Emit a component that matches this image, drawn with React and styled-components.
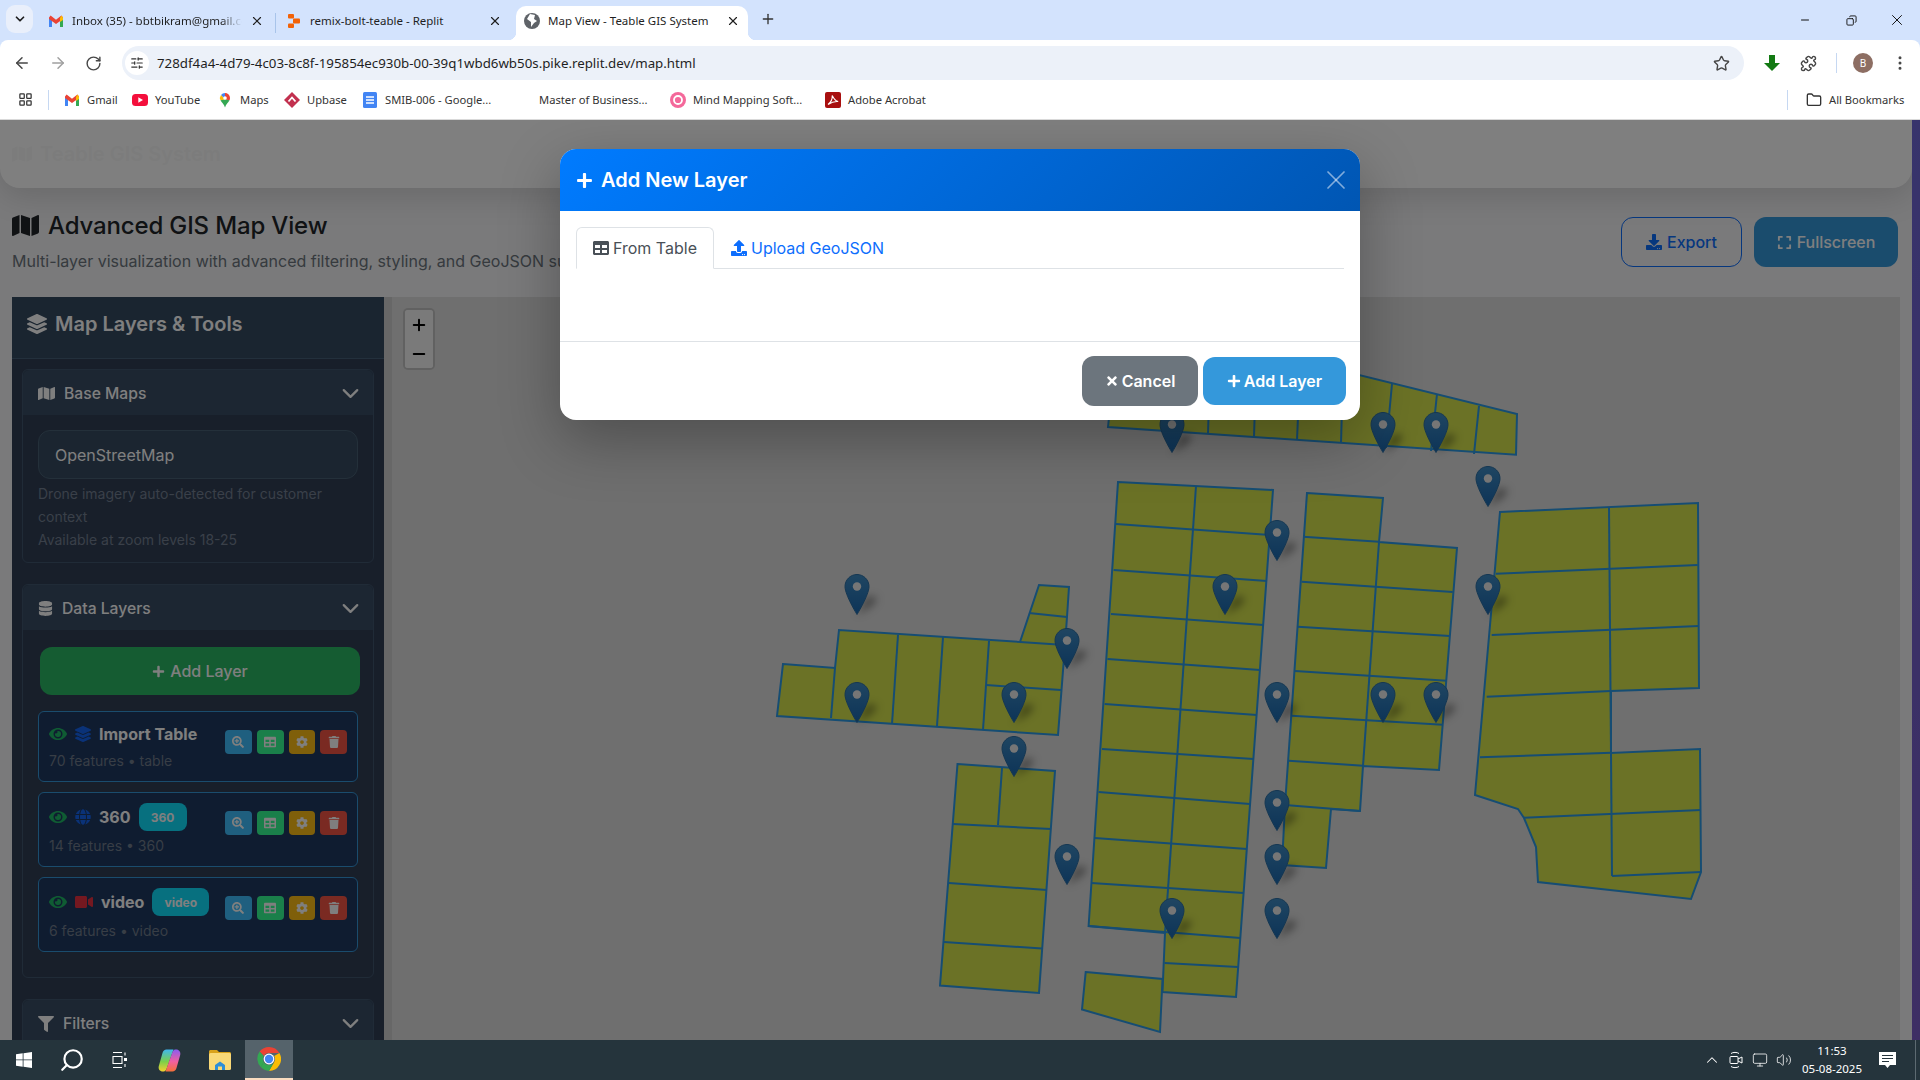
import styled, { createGlobalStyle } from "styled-components";
import {
  ArrowLeft,
  ArrowRight,
  ChevronDown,
  ChevronUp,
  Copy,
  EllipsisVertical,
  Folder,
  LayoutGrid,
  Minus,
  Monitor,
  Plus,
  Puzzle,
  RotateCw,
  Search,
  SlidersHorizontal,
  Star,
  Volume2,
  X,
} from "lucide-react";
import {
  FaCog,
  FaDatabase,
  FaDownload,
  FaExpand,
  FaEye,
  FaFilter,
  FaGlobe,
  FaLayerGroup,
  FaMap,
  FaPlus,
  FaSearchPlus,
  FaTable,
  FaTimes,
  FaTrash,
  FaUpload,
  FaVideo,
} from "react-icons/fa";

const GlobalStyle = createGlobalStyle`
  html, body {
    margin: 0;
    padding: 0;
    overflow: hidden;
    background: #fff;
    font-family: Inter, "Liberation Sans", sans-serif;
  }
  * { box-sizing: border-box; }
`;

const Shell = styled.div`
  width: 1920px;
  height: 1080px;
  display: flex;
  flex-direction: column;
`;

/* browser chrome */
const TabStrip = styled.div`
  height: 40px;
  flex: none;
  display: flex;
  align-items: flex-end;
  padding-left: 6px;
  background: #d3e3fd;
  font-family: "Noto Sans", sans-serif;
  font-size: 11.5px;
  color: #1f1f1f;
`;

const TabMenu = styled.div`
  width: 27px;
  height: 28px;
  margin: 0 7px 7px 0;
  border-radius: 9px;
  background: #e9effb;
  display: flex;
  align-items: center;
  justify-content: center;
`;

const Tab = styled.div`
  position: relative;
  width: 232px;
  height: 34px;
  margin-right: ${(p) => (p.$divided ? 0 : 6)}px;
  padding: 0 8px 5px;
  display: flex;
  align-items: center;
  gap: 8px;
  border-radius: 10px 10px 0 0;
  background: ${(p) => (p.$active ? "#fff" : "transparent")};

  ${(p) =>
    p.$active &&
    `
    &::before, &::after {
      content: "";
      position: absolute;
      bottom: 0;
      width: 8px;
      height: 8px;
    }
    &::before {
      left: -8px;
      background: radial-gradient(circle at 0 0, transparent 8px, #fff 8.5px);
    }
    &::after {
      right: -8px;
      background: radial-gradient(circle at 100% 0, transparent 8px, #fff 8.5px);
    }
  `}
`;

const TabTitle = styled.span`
  flex: 1;
  min-width: 0;
  overflow: hidden;
  white-space: nowrap;
  line-height: 16px;
  ${(p) =>
    p.$fade &&
    `
    -webkit-mask-image: linear-gradient(90deg, #000 88%, transparent);
    mask-image: linear-gradient(90deg, #000 88%, transparent);
  `}
`;

const TabDivider = styled.div`
  width: 1px;
  height: 20px;
  margin: 0 2.5px 7px;
  background: #a8c4ea;
`;

const NewTab = styled.div`
  width: 28px;
  height: 28px;
  margin: 0 0 7px 0;
  display: flex;
  align-items: center;
  justify-content: center;
  color: #333;
`;

const WindowControls = styled.div`
  margin-left: auto;
  display: flex;
  align-self: flex-start;
  padding-top: 10px;
  color: #111;
`;

const WindowButton = styled.div`
  width: 46px;
  height: 20px;
  display: flex;
  align-items: center;
  justify-content: center;
`;

const ToolbarBack = styled.div`
  background: #d3e3fd;
  flex: none;
`;

const Toolbar = styled.div`
  height: 40px;
  padding-top: 6px;
  display: flex;
  align-items: flex-start;
  background: #fff;
  border-radius: 8px 8px 0 0;
`;

const NavIcons = styled.div`
  width: 122px;
  height: 34px;
  flex: none;
  padding-left: 13px;
  display: flex;
  align-items: center;
  gap: 18px;
  color: #474747;
`;

const Omnibox = styled.div`
  width: 1622px;
  height: 34px;
  flex: none;
  display: flex;
  align-items: center;
  padding-left: 3px;
  border-radius: 17px;
  background: #ecf1f9;
  font-family: "Noto Sans", sans-serif;
  font-size: 13.3px;
  color: #1f1f1f;
`;

const SiteBadge = styled.div`
  width: 24px;
  height: 24px;
  margin-right: 8px;
  border-radius: 50%;
  background: #fff;
  display: flex;
  align-items: center;
  justify-content: center;
`;

const OmniStar = styled.div`
  margin-left: auto;
  margin-right: 14px;
  display: flex;
  color: #474747;
`;

const ToolIcons = styled.div`
  flex: 1;
  height: 34px;
  display: flex;
  align-items: center;
  padding-left: 19px;
  color: #474747;
`;

const ToolSlot = styled.div`
  width: ${(p) => p.$w}px;
  display: flex;
  align-items: center;
`;

const ToolDivider = styled.div`
  width: 1px;
  height: 20px;
  margin-right: 16px;
  background: #c6d8f2;
`;

const Avatar = styled.div`
  width: 20px;
  height: 20px;
  border-radius: 50%;
  background: #8d6e63;
  color: #fff;
  font-size: 10px;
  font-family: "Noto Sans", sans-serif;
  display: flex;
  align-items: center;
  justify-content: center;
`;

const BookmarksBar = styled.div`
  height: 40px;
  flex: none;
  display: flex;
  align-items: center;
  padding-left: 18px;
  background: #fff;
  border-bottom: 1px solid #d9d9d9;
  font-family: "Noto Sans", sans-serif;
  font-size: 11.2px;
  color: #333;
`;

const BarDivider = styled.div`
  width: 1px;
  height: 20px;
  margin: ${(p) => p.$margin};
  background: #c6d8f2;
`;

const Bookmark = styled.div`
  width: ${(p) => p.$w}px;
  flex: none;
  display: flex;
  align-items: center;
  gap: 7px;
  white-space: nowrap;
`;

const IconSpace = styled.span`
  width: 16px;
  height: 16px;
  flex: none;
`;

/* page under the modal */
const Page = styled.div`
  position: relative;
  flex: 1;
  min-height: 0;
  display: flex;
  overflow: hidden;
`;

const PageBody = styled.div`
  width: 1912px;
  flex: none;
  display: flex;
  flex-direction: column;
  background: #f4f4f6;
`;

const PageEdge = styled.div`
  flex: 1;
  background: linear-gradient(180deg, #6f67d8, #7c5cc8);
`;

const Navbar = styled.header`
  height: 68px;
  flex: none;
  display: flex;
  align-items: center;
  gap: 8px;
  padding-left: 12px;
  background: #fff;
  border-radius: 0 0 20px 20px;
  box-shadow: 0 8px 32px rgba(0, 0, 0, 0.14);
  font-size: 20px;
  font-weight: 600;
  color: #f8f9f8;
`;

const PageHead = styled.section`
  height: 109px;
  flex: none;
  display: flex;
  align-items: center;
  justify-content: space-between;
  padding: 0 14px 0 12px;
`;

const HeadText = styled.div`
  margin-bottom: 5px;
`;

const PageTitle = styled.h1`
  margin: 0;
  display: flex;
  align-items: center;
  gap: 9px;
  font-size: 24px;
  line-height: 32px;
  font-weight: 500;
  letter-spacing: -0.15px;
  color: #212529;
`;

const PageSubtitle = styled.p`
  margin: 9px 0 0;
  font-size: 16px;
  line-height: 20px;
  color: #6c757d;
`;

const HeadActions = styled.div`
  display: flex;
  gap: 12px;
  margin-bottom: 1px;
`;

const HeadButton = styled.button`
  width: ${(p) => p.$w}px;
  height: 50px;
  display: flex;
  align-items: center;
  justify-content: center;
  gap: 5px;
  border-radius: 12px;
  border: ${(p) => (p.$solid ? "none" : "1px solid #0d6efd")};
  background: ${(p) => (p.$solid ? "#3498db" : "transparent")};
  color: ${(p) => (p.$solid ? "#fff" : "#0d6efd")};
  font-family: inherit;
  font-size: 16px;
  font-weight: 500;
`;

const Workspace = styled.main`
  flex: 1;
  min-height: 0;
  display: grid;
  grid-template-columns: 372px 8px 1508px;
  margin-left: 12px;
`;

const Sidebar = styled.aside`
  background: #303e54;
  overflow: hidden;
`;

const SidebarHeader = styled.div`
  height: 62px;
  display: flex;
  align-items: center;
  gap: 8px;
  padding: 0 15px 8px;
  background: #344a60;
  border-bottom: 1px solid #466078;
  font-size: 20px;
  font-weight: 600;
  color: #fff;
`;

const SidebarBody = styled.div`
  padding: 10px 10px;
`;

const Card = styled.section`
  margin-bottom: 21px;
  border: 1px solid #40566e;
  border-radius: 6px;
`;

const CardHeader = styled.div`
  height: 45px;
  display: flex;
  align-items: center;
  gap: 9px;
  padding: 2px 9px 0 15px;
  background: #384c64;
  border-radius: 6px 6px 0 0;
  font-size: 15.7px;
  font-weight: 500;
  color: #fff;

  > :last-child {
    margin-left: auto;
  }
`;

const CardBody = styled.div`
  padding: ${(p) => p.$padding};
`;

const SelectBox = styled.div`
  height: 49px;
  display: flex;
  align-items: center;
  padding: 0 16px;
  border: 1px solid #486074;
  border-radius: 12px;
  background: #364a60;
  font-size: 16px;
  color: #fff;
`;

const HelpText = styled.div`
  margin-top: 3px;
  font-size: 14px;
  line-height: 23px;
  color: #748092;
`;

const AddLayerButton = styled.button`
  width: 320px;
  height: 48px;
  margin: 0 0 16px 2px;
  display: flex;
  align-items: center;
  justify-content: center;
  gap: 5px;
  border: none;
  border-radius: 12px;
  background: #2ab864;
  color: #fff;
  font-family: inherit;
  font-size: 16px;
  font-weight: 500;
`;

const LayerItem = styled.div`
  display: flex;
  justify-content: space-between;
  align-items: flex-start;
  margin-bottom: 10px;
  padding: 10px;
  border: 1px solid #3498db;
  border-radius: 6px;
  background: #1e3860;
`;

const LayerHead = styled.div`
  min-height: 24px;
  display: flex;
  align-items: center;
  color: #fff;
`;

const LayerEye = styled.span`
  display: flex;
  margin-right: 8px;
  color: #1fb866;
`;

const LayerGlyph = styled.span`
  flex: none;
  display: flex;
  margin-right: 8px;
  color: ${(p) => p.$color};
`;

const LayerName = styled.span`
  font-size: 16px;
  font-weight: 700;
`;

const LayerBadge = styled.span`
  height: 28px;
  width: ${(p) => p.$w}px;
  margin-left: 8px;
  display: flex;
  align-items: center;
  justify-content: center;
  border-radius: 8px;
  background: #0fe0ff;
  font-size: 12px;
  font-weight: 700;
  color: #fff;
`;

const LayerMeta = styled.div`
  margin-top: 5px;
  font-size: 14px;
  line-height: 20px;
  color: #707c8c;
`;

const LayerActions = styled.div`
  display: flex;
  gap: 5px;
  margin-top: 8px;
`;

const ActionButton = styled.button`
  width: 26.75px;
  height: 24px;
  padding: 0;
  display: flex;
  align-items: center;
  justify-content: center;
  border: none;
  border-radius: 4px;
  background: ${(p) => p.$bg};
  color: #fff;
  font-size: 12px;
`;

const Resizer = styled.div`
  background: #cfcfcf;
`;

const MapPanel = styled.div`
  position: relative;
  background: #dedede;
  overflow: hidden;
`;

const MapCanvas = styled.svg`
  display: block;
  width: 1508px;
  height: 743px;
`;

const ZoomControl = styled.div`
  position: absolute;
  left: 11px;
  top: 11px;
  width: 32px;
  border: 2px solid rgba(0, 0, 0, 0.2);
  border-radius: 5px;
  background: #f4f4f4;
`;

const ZoomButton = styled.div`
  height: 29px;
  display: flex;
  align-items: center;
  justify-content: center;
  color: #000;
  background: #f4f4f4;
  border-radius: 3px;
`;

const Backdrop = styled.div`
  position: absolute;
  inset: 0;
  background: rgba(0, 0, 0, 0.5);
`;

const ModalLayer = styled.div`
  position: absolute;
  inset: 0;
  display: flex;
  justify-content: center;
  align-items: flex-start;
  padding-top: 29px;
`;

const Modal = styled.div`
  width: 800px;
  height: 271px;
  display: flex;
  flex-direction: column;
  background: #fff;
  border-radius: 16px;
  overflow: hidden;
  box-shadow: 0 20px 60px rgba(0, 0, 0, 0.3);
`;

const ModalHeader = styled.div`
  height: 62px;
  flex: none;
  display: flex;
  align-items: center;
  gap: 8px;
  padding: 0 8px 0 16px;
  background: linear-gradient(135deg, #007bff, #0056b3);
  color: #fff;
  font-size: 20px;
  font-weight: 600;
`;

const ModalClose = styled.span`
  margin-left: auto;
  display: flex;
  color: rgba(255, 255, 255, 0.5);
`;

const ModalBody = styled.div`
  flex: 1;
  padding: 16px 16px 0;
`;

const TabNav = styled.div`
  height: 42px;
  display: flex;
  border-bottom: 1px solid #dee2e6;
`;

const TabLink = styled.div`
  height: 42px;
  padding: 0 16px;
  display: flex;
  align-items: center;
  gap: 4px;
  border: 1px solid ${(p) => (p.$active ? "#dee2e6" : "transparent")};
  border-bottom-color: ${(p) => (p.$active ? "#fff" : "transparent")};
  border-radius: 6px 6px 0 0;
  font-size: 16px;
  color: ${(p) => (p.$active ? "#495057" : "#0d6efd")};
`;

const ModalFooter = styled.div`
  height: 79px;
  flex: none;
  display: flex;
  align-items: center;
  justify-content: flex-end;
  gap: 5px;
  padding-right: 14px;
  border-top: 1px solid #dee2e6;
`;

const FooterButton = styled.button`
  width: ${(p) => p.$w}px;
  height: ${(p) => p.$h}px;
  display: flex;
  align-items: center;
  justify-content: center;
  gap: 3px;
  border: none;
  border-radius: 12px;
  background: ${(p) => p.$bg};
  color: #fff;
  font-family: inherit;
  font-size: 16px;
  font-weight: 600;
`;

/* windows taskbar */
const Taskbar = styled.footer`
  height: 40px;
  flex: none;
  display: flex;
  align-items: stretch;
  background: #25343c;
  color: #fff;
`;

const TaskButton = styled.div`
  width: ${(p) => p.$w || 49}px;
  display: flex;
  align-items: center;
  justify-content: center;
  ${(p) =>
    p.$active &&
    `
    background: #55636b;
    border-bottom: 2px solid #fadcc0;
  `}
`;

const Tray = styled.div`
  margin-left: auto;
  display: flex;
  align-items: center;
`;

const TraySlot = styled.div`
  width: 24px;
  display: flex;
  justify-content: center;
`;

const Clock = styled.div`
  width: 72px;
  text-align: center;
  font-family: "Noto Sans", sans-serif;
  font-size: 11.5px;
  line-height: 18px;
`;

const Notify = styled.div`
  width: 48px;
  height: 40px;
  margin-right: 4px;
  padding-left: 11px;
  display: flex;
  align-items: center;
  border-right: 1px solid #5d6a71;
`;

/* favicons */
const GmailIcon = () => (
  <svg width="16" height="16" viewBox="0 0 16 16">
    <rect x="1" y="5" width="3" height="9" fill="#4285f4" />
    <rect x="12" y="5" width="3" height="9" fill="#34a853" />
    <path d="M1 4.500 2.600 2.500 8 6.800 13.400 2.500 15 4.500V6L8 11 1 6Z" fill="#ea4335" />
    <path d="M12 5 13.400 2.500 15 4.500V7L12 9Z" fill="#fbbc04" />
  </svg>
);

const YoutubeIcon = () => (
  <svg width="16" height="16" viewBox="0 0 16 16">
    <rect x="0" y="2" width="16" height="12" rx="3.500" fill="#f40f3c" />
    <path d="M6.300 5.300 11 8l-4.700 2.700Z" fill="#fff" />
  </svg>
);

const MapsIcon = () => (
  <svg width="16" height="16" viewBox="0 0 16 16">
    <path d="M8 1a5 5 0 0 0-4 2l4 4.500Z" fill="#4285f4" />
    <path d="M8 1a5 5 0 0 1 5 5c0 .8-.2 1.500-.5 2.200L8 7.500Z" fill="#ea4335" />
    <path d="M4 3a5 5 0 0 0-.5 5.200L8 7.500Z" fill="#fbbc04" />
    <path d="M3.500 8.200C4.800 10.600 7 12 8 15.500c1-3.500 3.200-4.900 4.500-7.300L8 7.500Z" fill="#34a853" />
    <circle cx="8" cy="6" r="1.800" fill="#fff" />
  </svg>
);

const UpbaseIcon = () => (
  <svg width="16" height="16" viewBox="0 0 16 16">
    <path d="M8 0 16 8 8 16 0 8Z" fill="#c2304f" />
    <path d="M4.500 9.500 8 5.500l3.500 4" fill="none" stroke="#fff" strokeWidth="1.800" />
  </svg>
);

const DocsIcon = () => (
  <svg width="16" height="16" viewBox="0 0 16 16">
    <rect x="1" y="0" width="14" height="16" rx="1.500" fill="#4285f4" />
    <path d="M4 5h8M4 8h8M4 11h8" stroke="#fff" strokeWidth="1.400" />
  </svg>
);

const MindIcon = () => (
  <svg width="16" height="16" viewBox="0 0 16 16">
    <circle cx="8" cy="8" r="8" fill="#f4689a" />
    <circle cx="8" cy="8" r="4" fill="none" stroke="#fff" strokeWidth="1.800" />
  </svg>
);

const AcrobatIcon = () => (
  <svg width="16" height="16" viewBox="0 0 16 16">
    <rect width="16" height="16" rx="2" fill="#a80f0f" />
    <path d="M3 12.500C6 10 7.500 6 7.200 3.500c2 4 3 5.500 6 6-3-.3-6.500.5-10.200 3Z" fill="none" stroke="#fff" strokeWidth="1.100" />
  </svg>
);

const ReplitIcon = () => (
  <svg width="16" height="16" viewBox="0 0 16 16" fill="#f26207">
    <rect x="2" y="1" width="6" height="4.500" rx="1" />
    <rect x="7" y="5.500" width="7" height="5" rx="1" />
    <rect x="2" y="10.500" width="6" height="4.500" rx="1" />
  </svg>
);

const GlobeFavicon = () => (
  <svg width="16" height="16" viewBox="0 0 16 16">
    <circle cx="8" cy="8" r="8" fill="#5f6368" />
    <path d="M6 1 3 6l4 3v5l3-4 3-2-3-2 1-4Z" fill="#fff" />
  </svg>
);

const DownloadArrow = () => (
  <svg width="18" height="18" viewBox="0 0 18 18">
    <path d="M6 1h6v8h5l-8 8-8-8h5Z" fill="#137a13" />
  </svg>
);

const WindowsIcon = () => (
  <svg width="16" height="16" viewBox="0 0 16 16" fill="#fff">
    <path d="M0 2.200 6.700 1.300V7.500H0ZM7.500 1.200 16 0V7.500H7.500ZM0 8.300H6.700V14.700L0 13.800ZM7.500 8.300H16V16L7.500 14.800Z" />
  </svg>
);

const TaskViewIcon = () => (
  <svg width="16" height="16" viewBox="0 0 16 16" fill="none" stroke="#fff" strokeWidth="1.100">
    <path d="M1 .5h9M1 15.500h9M1 4.500h9v7H1ZM13 .5v3M13 12v3" />
    <rect x="12" y="6" width="3" height="3" fill="#fff" stroke="none" />
  </svg>
);

const CopilotIcon = () => (
  <svg width="23" height="23" viewBox="0 0 23 23">
    <defs>
      <linearGradient id="cpA" x1="0" y1="0" x2="0" y2="1">
        <stop offset="0" stopColor="#3fb8f0" />
        <stop offset="0.55" stopColor="#7ad04a" />
        <stop offset="1" stopColor="#f4d02f" />
      </linearGradient>
      <linearGradient id="cpB" x1="0" y1="0" x2="0" y2="1">
        <stop offset="0" stopColor="#8a5cf0" />
        <stop offset="0.55" stopColor="#f060a0" />
        <stop offset="1" stopColor="#f47038" />
      </linearGradient>
    </defs>
    <path d="M8.500 .5h7L8.500 20c-.8 2-2 2.500-3.500 2.500C1.800 22.500 0 20 .8 17L4.500 4c.6-2.300 2-3.500 4-3.500Z" fill="url(#cpA)" />
    <path d="M14.500 22.500h-7L14.500 3c.8-2 2-2.500 3.500-2.500 3.200 0 5 2.500 4.200 5.500L18.500 19c-.6 2.300-2 3.500-4 3.500Z" fill="url(#cpB)" />
  </svg>
);

const ExplorerIcon = () => (
  <svg width="22" height="20" viewBox="0 0 22 20">
    <path d="M0 1.500C0 .7.700 0 1.500 0H8l2 2h10.500c.8 0 1.500.7 1.500 1.500V5H0Z" fill="#d9a21b" />
    <rect y="3" width="22" height="17" rx="1.500" fill="#f9d977" />
    <path d="M6 20v-5l5-3.500 5 3.500v5h-3v-3.500H9V20Z" fill="#2f8fd8" />
  </svg>
);

const ChromeIcon = () => (
  <svg width="24" height="24" viewBox="0 0 24 24">
    <path d="M12 0a12 12 0 0 1 10.400 6H12a6 6 0 0 0-5.200 3L2.600 4.600A12 12 0 0 1 12 0Z" fill="#ea4335" />
    <path d="M2.600 4.600 6.800 9a6 6 0 0 0 0 6l-3 5.100a12 12 0 0 1-1.200-15.500Z" fill="#34a853" />
    <path d="M22.400 6A12 12 0 0 1 12 24l5.200-9a6 6 0 0 0 0-6Z" fill="#fbbc04" />
    <path d="M6.800 15a6 6 0 0 0 10.400 0L12 24a12 12 0 0 1-8.200-3.900Z" fill="#34a853" />
    <circle cx="12" cy="12" r="5.400" fill="#fff" />
    <circle cx="12" cy="12" r="4.200" fill="#4285f4" />
  </svg>
);

const MeetIcon = () => (
  <svg width="16" height="18" viewBox="0 0 16 18" fill="none" stroke="#fff" strokeWidth="1">
    <path d="M3 2.500C5 1 9 1 11 2.500M3 15.500C5 17 9 17 11 15.500" />
    <rect x="2" y="5.500" width="8" height="7" rx="1" />
    <path d="M10 8 14 6v6l-4-2" />
  </svg>
);

const NotifyIcon = () => (
  <svg width="17" height="17" viewBox="0 0 17 17">
    <path d="M0 0h17v13h-6l-2.500 3L6 13H0Z" fill="#fff" />
    <path d="M3 3.500h11M3 6.500h11M3 9.500h7" stroke="#25343c" strokeWidth="1" />
  </svg>
);

/* map data, in page coordinates */
const PARCELS = [
  "783,664 835,668 839,630 1020,642 1039,585 1069,587 1067,617 1065,645 1058,735 777,716",
  "957.500,764 1055,771 1039,993 940,985.500",
  "1118,482 1273,490 1236,997 1162.500,992 1165,933 1088.600,926",
  "1085.700,972 1162.500,979 1160,1032 1082,1009.500",
  "1307,493 1383,498 1379,542 1457,548 1439,770 1363,766 1360,811 1331,809 1326,868 1282,865 1285,805",
  "1500,512 1698,503 1699,688 1611,691 1611,753 1700,749 1701,872 1691,899 1538,882 1536,847 1524,818 1518,809 1475,795",
  "1120,316 1517,414 1516,454.700 1108,427",
];

const PARCEL_LINES = [
  [835, 668, 831, 718], [898, 635, 892, 724], [943, 637, 937, 726], [989, 641, 983, 730],
  [986, 685, 1061, 690], [1029, 613, 1067, 617], [1020, 642, 1065, 645],
  [953, 824, 1051, 829], [949, 883, 1047, 890], [944, 942, 1042, 948.5], [1002, 768, 998, 825],
  [1196, 486, 1168, 889], [1168, 889, 1165, 933],
  [1116, 524, 1270, 535], [1113.6, 570, 1267, 581], [1111, 614, 1263.6, 625], [1107.5, 659, 1260, 670],
  [1104.6, 704, 1257, 715], [1102, 749, 1253.6, 759], [1098.6, 792, 1250, 804], [1094.6, 838, 1247, 849],
  [1091.4, 883, 1243.6, 893], [1088.6, 926, 1240.4, 938], [1164.6, 963, 1238, 967],
  [1303, 536.7, 1379, 541.7], [1301.7, 581.7, 1452.7, 592], [1297.7, 626.7, 1450, 636],
  [1295, 671, 1446.7, 680.7], [1291.7, 715.7, 1442.7, 724.7], [1288.7, 760.7, 1363, 765.7],
  [1285, 805, 1360, 811], [1379, 542, 1363, 766],
  [1496, 573.7, 1697.7, 565], [1491.7, 635, 1698.7, 626], [1486.7, 696.7, 1610.7, 691],
  [1480, 757.3, 1611.3, 752.7], [1524, 817.7, 1700.7, 810], [1609, 507, 1612, 876], [1612, 876, 1701, 872],
  [1392, 384, 1386, 448], [1437, 394, 1431, 451], [1479, 406, 1474, 454],
  [1343, 373, 1341, 443], [1300, 370, 1297, 440], [1256, 370, 1254, 437], [1210, 370, 1208, 433],
];

const PIN_TIPS = [
  [857, 615], [857, 723], [1014, 723], [1014, 777], [1067, 669], [1067, 885], [1172, 453],
  [1225, 615], [1172, 939], [1277, 561], [1277, 723], [1277, 831], [1277, 885], [1277, 939],
  [1383, 453], [1436, 453], [1488, 507], [1488, 615], [1383, 723], [1436, 723],
];

function MapDrawing() {
  return (
    <MapCanvas viewBox="392 297 1508 743">
      <defs>
        <linearGradient id="pinFill" x1="0" y1="0" x2="0" y2="1">
          <stop offset="0" stopColor="#3f8cc4" />
          <stop offset="1" stopColor="#1a68b0" />
        </linearGradient>
        <filter id="pinShadow" x="-80%" y="-80%" width="260%" height="260%">
          <feGaussianBlur stdDeviation="4" />
        </filter>
      </defs>
      <g fill="#d6e44c" stroke="#2c9ae6" strokeWidth="2">
        {PARCELS.map((points) => (
          <polygon key={points} points={points} />
        ))}
      </g>
      <g stroke="#2c9ae6" strokeWidth="2">
        {PARCEL_LINES.map(([x1, y1, x2, y2]) => (
          <line key={`${x1}-${y1}-${x2}`} x1={x1} y1={y1} x2={x2} y2={y2} />
        ))}
      </g>
      {PIN_TIPS.map(([x, y]) => (
        <g key={`${x}-${y}`} transform={`translate(${x - 12.5} ${y - 41})`}>
          <path d="M12.500 41 L28 31 L33 24 L23 22 Z" fill="rgba(0,0,0,0.42)" filter="url(#pinShadow)" />
          <path
            d="M12.500 .5C5.900 .5.500 5.900.500 12.500.500 21 12.500 40.500 12.500 40.500S24.500 21 24.500 12.500C24.500 5.900 19.100.5 12.500.5Z"
            fill="url(#pinFill)"
            stroke="#2a6ea4"
          />
          <circle cx="12.500" cy="12.500" r="4.200" fill="#ececec" />
        </g>
      ))}
    </MapCanvas>
  );
}

const LAYERS = [
  { name: "Import Table", meta: "70 features • table", glyph: <FaLayerGroup size={16} />, color: "#1464f0" },
  { name: "360", meta: "14 features • 360", glyph: <FaGlobe size={16} />, color: "#1464f0", badge: 48 },
  { name: "video", meta: "6 features • video", glyph: <FaVideo size={18} />, color: "#e83040", badge: 57 },
];

function Layer({ layer }) {
  return (
    <LayerItem>
      <div>
        <LayerHead>
          <LayerEye>
            <FaEye size={18} />
          </LayerEye>
          <LayerGlyph $color={layer.color}>{layer.glyph}</LayerGlyph>
          <LayerName>{layer.name}</LayerName>
          {layer.badge && <LayerBadge $w={layer.badge}>{layer.name}</LayerBadge>}
        </LayerHead>
        <LayerMeta>{layer.meta}</LayerMeta>
      </div>
      <LayerActions>
        <ActionButton $bg="#3fbfff"><FaSearchPlus /></ActionButton>
        <ActionButton $bg="#35ff95"><FaTable /></ActionButton>
        <ActionButton $bg="#ffbe14"><FaCog /></ActionButton>
        <ActionButton $bg="#f45444"><FaTrash /></ActionButton>
      </LayerActions>
    </LayerItem>
  );
}

function BrowserChrome() {
  return (
    <>
      <TabStrip>
        <TabMenu>
          <ChevronDown size={14} strokeWidth={3} />
        </TabMenu>
        <Tab $divided>
          <GmailIcon />
          <TabTitle $fade>Inbox (35) - bbtbikram@gmail.com</TabTitle>
          <X size={14} strokeWidth={2} />
        </Tab>
        <TabDivider />
        <Tab>
          <ReplitIcon />
          <TabTitle>remix-bolt-teable - Replit</TabTitle>
          <X size={14} strokeWidth={2} />
        </Tab>
        <Tab $active>
          <GlobeFavicon />
          <TabTitle>Map View - Teable GIS System</TabTitle>
          <X size={14} strokeWidth={2} />
        </Tab>
        <NewTab>
          <Plus size={16} strokeWidth={2} />
        </NewTab>
        <WindowControls>
          <WindowButton><Minus size={12} /></WindowButton>
          <WindowButton><Copy size={11} style={{ transform: "scaleX(-1)" }} /></WindowButton>
          <WindowButton><X size={18} strokeWidth={1.3} /></WindowButton>
        </WindowControls>
      </TabStrip>
      <ToolbarBack>
        <Toolbar>
          <NavIcons>
            <ArrowLeft size={18} />
            <ArrowRight size={18} color="#a0a0a0" />
            <RotateCw size={17} />
          </NavIcons>
          <Omnibox>
            <SiteBadge>
              <SlidersHorizontal size={14} color="#333" />
            </SiteBadge>
            728df4a4-4d79-4c03-8c8f-195854ec930b-00-39q1wbd6wb50s.pike.replit.dev/map.html
            <OmniStar>
              <Star size={17} />
            </OmniStar>
          </Omnibox>
          <ToolIcons>
            <ToolSlot $w={37}><DownloadArrow /></ToolSlot>
            <ToolSlot $w={36}><Puzzle size={17} /></ToolSlot>
            <ToolDivider />
            <ToolSlot $w={38}><Avatar>B</Avatar></ToolSlot>
            <ToolSlot $w={20}><EllipsisVertical size={18} /></ToolSlot>
          </ToolIcons>
        </Toolbar>
      </ToolbarBack>
      <BookmarksBar>
        <LayoutGrid size={15} />
        <BarDivider $margin="0 15px 0 15px" />
        <Bookmark $w={68}><GmailIcon />Gmail</Bookmark>
        <Bookmark $w={85}><YoutubeIcon />YouTube</Bookmark>
        <Bookmark $w={67}><MapsIcon />Maps</Bookmark>
        <Bookmark $w={78}><UpbaseIcon />Upbase</Bookmark>
        <Bookmark $w={154}><DocsIcon />SMIB-006 - Google...</Bookmark>
        <Bookmark $w={154}><IconSpace />Master of Business...</Bookmark>
        <Bookmark $w={155}><MindIcon />Mind Mapping Soft...</Bookmark>
        <Bookmark $w={120}><AcrobatIcon />Adobe Acrobat</Bookmark>
        <BarDivider $margin="0 18px 0 auto" />
        <Bookmark $w={114}><Folder size={16} />All Bookmarks</Bookmark>
      </BookmarksBar>
    </>
  );
}

function SidebarPanel() {
  return (
    <Sidebar>
      <SidebarHeader>
        <FaLayerGroup size={20} />
        Map Layers &amp; Tools
      </SidebarHeader>
      <SidebarBody>
        <Card>
          <CardHeader>
            <FaMap size={17} />
            Base Maps
            <ChevronDown size={27} strokeWidth={2} />
          </CardHeader>
          <CardBody $padding="15px 15px 11px">
            <SelectBox>OpenStreetMap</SelectBox>
            <HelpText>
              Drone imagery auto-detected for customer context
              <br />
              Available at zoom levels 18-25
            </HelpText>
          </CardBody>
        </Card>
        <Card>
          <CardHeader>
            <FaDatabase size={15} />
            Data Layers
            <ChevronDown size={27} strokeWidth={2} />
          </CardHeader>
          <CardBody $padding="17px 15px 15px">
            <AddLayerButton>
              <FaPlus size={13} />
              Add Layer
            </AddLayerButton>
            {LAYERS.map((layer) => (
              <Layer key={layer.name} layer={layer} />
            ))}
          </CardBody>
        </Card>
        <Card>
          <CardHeader>
            <FaFilter size={16} />
            Filters
            <ChevronDown size={27} strokeWidth={2} />
          </CardHeader>
        </Card>
      </SidebarBody>
    </Sidebar>
  );
}

function AddLayerModal() {
  return (
    <ModalLayer>
      <Modal>
        <ModalHeader>
          <FaPlus size={17} />
          Add New Layer
          <ModalClose>
            <X size={32} strokeWidth={1.3} />
          </ModalClose>
        </ModalHeader>
        <ModalBody>
          <TabNav>
            <TabLink $active>
              <FaTable size={16} />
              From Table
            </TabLink>
            <TabLink>
              <FaUpload size={16} />
              Upload GeoJSON
            </TabLink>
          </TabNav>
        </ModalBody>
        <ModalFooter>
          <FooterButton $w={116} $h={50} $bg="#6c757d">
            <FaTimes size={14} />
            Cancel
          </FooterButton>
          <FooterButton $w={143} $h={48} $bg="#3498db">
            <FaPlus size={14} />
            Add Layer
          </FooterButton>
        </ModalFooter>
      </Modal>
    </ModalLayer>
  );
}

function WindowsTaskbar() {
  return (
    <Taskbar>
      <TaskButton $w={48}><WindowsIcon /></TaskButton>
      <TaskButton $w={48}>
        <Search size={26} strokeWidth={2} style={{ transform: "scaleX(-1)" }} />
      </TaskButton>
      <TaskButton $w={48}><TaskViewIcon /></TaskButton>
      <TaskButton $w={51}><CopilotIcon /></TaskButton>
      <TaskButton $w={50}><ExplorerIcon /></TaskButton>
      <TaskButton $w={48} $active><ChromeIcon /></TaskButton>
      <Tray>
        <TraySlot><ChevronUp size={18} strokeWidth={1.4} /></TraySlot>
        <TraySlot><MeetIcon /></TraySlot>
        <TraySlot><Monitor size={16} strokeWidth={1.2} /></TraySlot>
        <TraySlot><Volume2 size={16} strokeWidth={1.2} /></TraySlot>
        <Clock>
          11:53
          <br />
          05-08-2025
        </Clock>
        <Notify><NotifyIcon /></Notify>
      </Tray>
    </Taskbar>
  );
}

function App() {
  return (
    <>
      <GlobalStyle />
      <Shell>
        <BrowserChrome />
        <Page>
          <PageBody>
            <Navbar>
              <FaMap size={20} />
              Teable GIS System
            </Navbar>
            <PageHead>
              <HeadText>
                <PageTitle>
                  <FaMap size={27} />
                  Advanced GIS Map View
                </PageTitle>
                <PageSubtitle>
                  Multi-layer visualization with advanced filtering, styling, and GeoJSON support
                </PageSubtitle>
              </HeadText>
              <HeadActions>
                <HeadButton $w={121}>
                  <FaDownload size={16} />
                  Export
                </HeadButton>
                <HeadButton $w={144} $solid>
                  <FaExpand size={15} />
                  Fullscreen
                </HeadButton>
              </HeadActions>
            </PageHead>
            <Workspace>
              <SidebarPanel />
              <Resizer />
              <MapPanel>
                <MapDrawing />
                <ZoomControl>
                  <ZoomButton><Plus size={18} strokeWidth={2.6} /></ZoomButton>
                  <ZoomButton><Minus size={18} strokeWidth={2.6} /></ZoomButton>
                </ZoomControl>
              </MapPanel>
            </Workspace>
          </PageBody>
          <PageEdge />
          <Backdrop />
          <AddLayerModal />
        </Page>
        <WindowsTaskbar />
      </Shell>
    </>
  );
}

export default App;
